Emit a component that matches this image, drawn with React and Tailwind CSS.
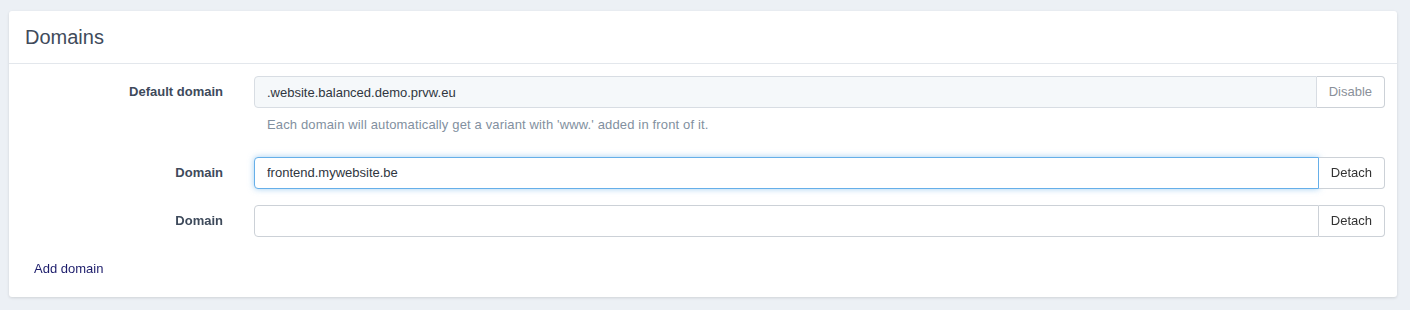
import { useState } from 'react';

function Row({ label, value, onChange, focused, readOnly, action, muted }) {
  return (
    <div className="flex items-center">
      <label className="w-[230px] shrink-0 pr-4 text-right text-[13px] font-bold text-[#3e4a5b]">{label}</label>
      <div className="flex flex-1 pl-[15px]">
        <input
          value={value}
          onChange={onChange}
          readOnly={readOnly}
          autoFocus={focused}
          className={`h-8 flex-1 rounded-l-[4px] border px-3 text-[13px] text-[#2f3640] outline-none ${
            readOnly ? 'bg-[#f5f8fa] border-[#d8dde3]' : 'bg-white border-[#ccd1d7] focus:border-[#66afe9] focus:shadow-[0_0_6px_rgba(102,175,233,0.6)]'}`}
        />
        <button className={`h-8 rounded-r-[4px] border border-l-0 border-[#ccd1d7] bg-white px-3 text-[13px] ${muted ? 'text-[#8a9099]' : 'text-[#333]'}`}>
          {action}
        </button>
      </div>
    </div>
  );
}

export default function App() {
  const [domains, setDomains] = useState(['frontend.mywebsite.be', '']);

  return (
    <div className="min-h-[310px] bg-[#ecf0f5] pt-[11px] px-[9px] pr-[13px] font-['Liberation_Sans',Arial,sans-serif]">
      <div className="rounded-[3px] bg-white shadow-[0_1px_3px_rgba(0,0,0,0.12)]">
        <div className="border-b border-[#e3e7ec] px-4 h-[53px] flex items-center">
          <h2 className="text-[20px] text-[#3f4b5b]">Domains</h2>
        </div>
        <div className="pt-3 pb-[17px] pr-3">
          <Row label="Default domain" value=".website.balanced.demo.prvw.eu" readOnly action="Disable" muted />
          <p className="ml-[245px] mt-[7px] pl-[13px] text-[13px] tracking-[0.15px] text-[#8290a0]">Each domain will automatically get a variant with 'www.' added in front of it.</p>
          <div className="mt-[22px] flex flex-col gap-4">
            {domains.map((d, i) => (
              <Row key={i} label="Domain" value={d} focused={i === 0}
                onChange={(e) => setDomains((p) => p.map((x, j) => (j === i ? e.target.value : x)))}
                action="Detach" />
            ))}
          </div>
          <button onClick={() => setDomains((p) => [...p, ''])} className="ml-[25px] mt-[22px] text-[13px] text-[#1c1c6b]">Add domain</button>
        </div>
      </div>
    </div>
  );
}
